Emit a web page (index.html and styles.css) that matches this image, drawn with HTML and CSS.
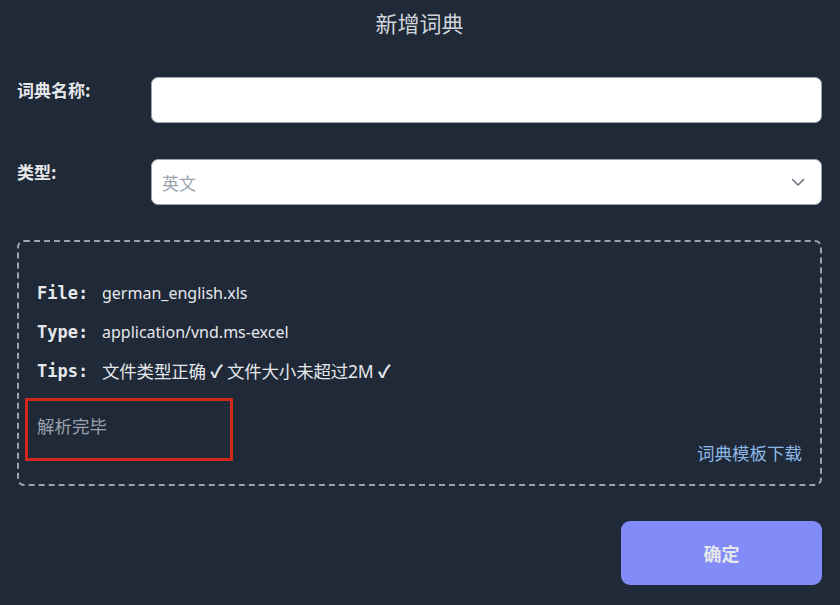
FILE: index.html
```html
<!DOCTYPE html>
<html lang="zh">
<head>
<meta charset="utf-8">
<title>新增词典</title>
<link rel="stylesheet" href="styles.css">
</head>
<body>
<div class="page">
  <h1 class="title">新增词典</h1>
  <div class="row">
    <label class="label">词典名称:</label>
    <div class="input"></div>
  </div>
  <div class="row">
    <label class="label">类型:</label>
    <div class="input select">
      <span class="placeholder">英文</span>
      <svg class="chevron" width="14" height="9" viewBox="0 0 14 9"><path d="M1.5 1.5 L7 7 L12.5 1.5" fill="none" stroke="#6b7280" stroke-width="1.6" stroke-linecap="round" stroke-linejoin="round"/></svg>
    </div>
  </div>
  <div class="dropzone">
    <div class="info">
      <div class="line"><span class="key">File:</span><span class="val">german_english.xls</span></div>
      <div class="line"><span class="key">Type:</span><span class="val">application/vnd.ms-excel</span></div>
      <div class="line"><span class="key">Tips:</span><span class="val tips">文件类型正确 <b class="ok">✓</b> 文件大小未超过2M <b class="ok">✓</b></span></div>
    </div>
    <div class="bottom">
      <div class="status">解析完毕</div>
      <a class="download">词典模板下载</a>
    </div>
  </div>
  <div class="actions">
    <button class="confirm">确定</button>
  </div>
</div>
</body>
</html>
```
FILE: styles.css
```css
html, body {
  margin: 0;
  padding: 0;
  background: #1f2937;
}
body {
  font-family: "Noto Sans", "Noto Sans CJK SC", sans-serif;
  color: #e5e7eb;
}
.page {
  padding: 0 18px 0 17px;
  height: 605px;
  box-sizing: border-box;
}
.title {
  margin: 0;
  padding-top: 6px;
  height: 77px;
  box-sizing: border-box;
  text-align: center;
  font-size: 22px;
  font-weight: normal;
  line-height: 32px;
  color: #d1d5db;
  font-family: "Noto Sans CJK SC", sans-serif;
}
.row {
  display: flex;
  align-items: flex-start;
  margin-bottom: 36px;
}
.row:nth-of-type(2) { margin-bottom: 35px; }
.label {
  width: 134px;
  flex: none;
  font-size: 17px;
  font-weight: bold;
  line-height: 26px;
  padding-top: 0;
  color: #e5e7eb;
  font-family: "Noto Sans CJK SC", sans-serif;
}
.input {
  flex: 1;
  height: 46px;
  box-sizing: border-box;
  background: #fff;
  border: 1px solid #9ca3af;
  border-radius: 7px;
}
.select {
  display: flex;
  align-items: center;
  justify-content: space-between;
  padding: 0 16px 0 10px;
}
.placeholder {
  color: #9ca3af;
  font-size: 17px;
  font-family: "Noto Sans CJK SC", sans-serif;
}
.chevron { display: block; }
.dropzone {
  height: 246px;
  box-sizing: border-box;
  border: 2px dashed #9ca3af;
  border-radius: 7px;
  padding: 31px 18px 21px 18px;
  display: flex;
  flex-direction: column;
  justify-content: space-between;
}
.line {
  display: flex;
  align-items: center;
  height: 39px;
  font-size: 17px;
}
.key {
  font-family: "DejaVu Sans Mono", "Liberation Mono", monospace;
  font-weight: bold;
  font-size: 17px;
  width: 65px;
  color: #e5e7eb;
}
.val {
  font-family: "Noto Sans", "Noto Sans CJK SC", sans-serif;
  font-size: 16px;
  color: #e5e7eb;
}
.tips {
  font-size: 17.5px;
  letter-spacing: -0.2px;
}
.ok {
  font-weight: bold;
}
.bottom {
  display: flex;
  justify-content: space-between;
  align-items: flex-end;
}
.status {
  width: 208px;
  height: 63px;
  border: 3px solid #d0271f;
  margin-left: -12px;
  padding: 12px 0 0 9px;
  margin-bottom: 2px;
  box-sizing: border-box;
  color: #9ca3af;
  font-size: 17.5px;
  line-height: 26px;
  font-family: "Noto Sans CJK SC", sans-serif;
}
.download {
  color: #8db8e8;
  font-size: 17.5px;
  line-height: 24px;
  margin-bottom: -2px;
  font-family: "Noto Sans CJK SC", sans-serif;
}
.actions {
  display: flex;
  justify-content: flex-end;
  margin-top: 35px;
}
.confirm {
  width: 201px;
  height: 64px;
  border: none;
  border-radius: 9px;
  background: #818cf8;
  color: #e5e7eb;
  font-size: 18px;
  font-weight: bold;
  font-family: "Noto Sans CJK SC", sans-serif;
}
```
